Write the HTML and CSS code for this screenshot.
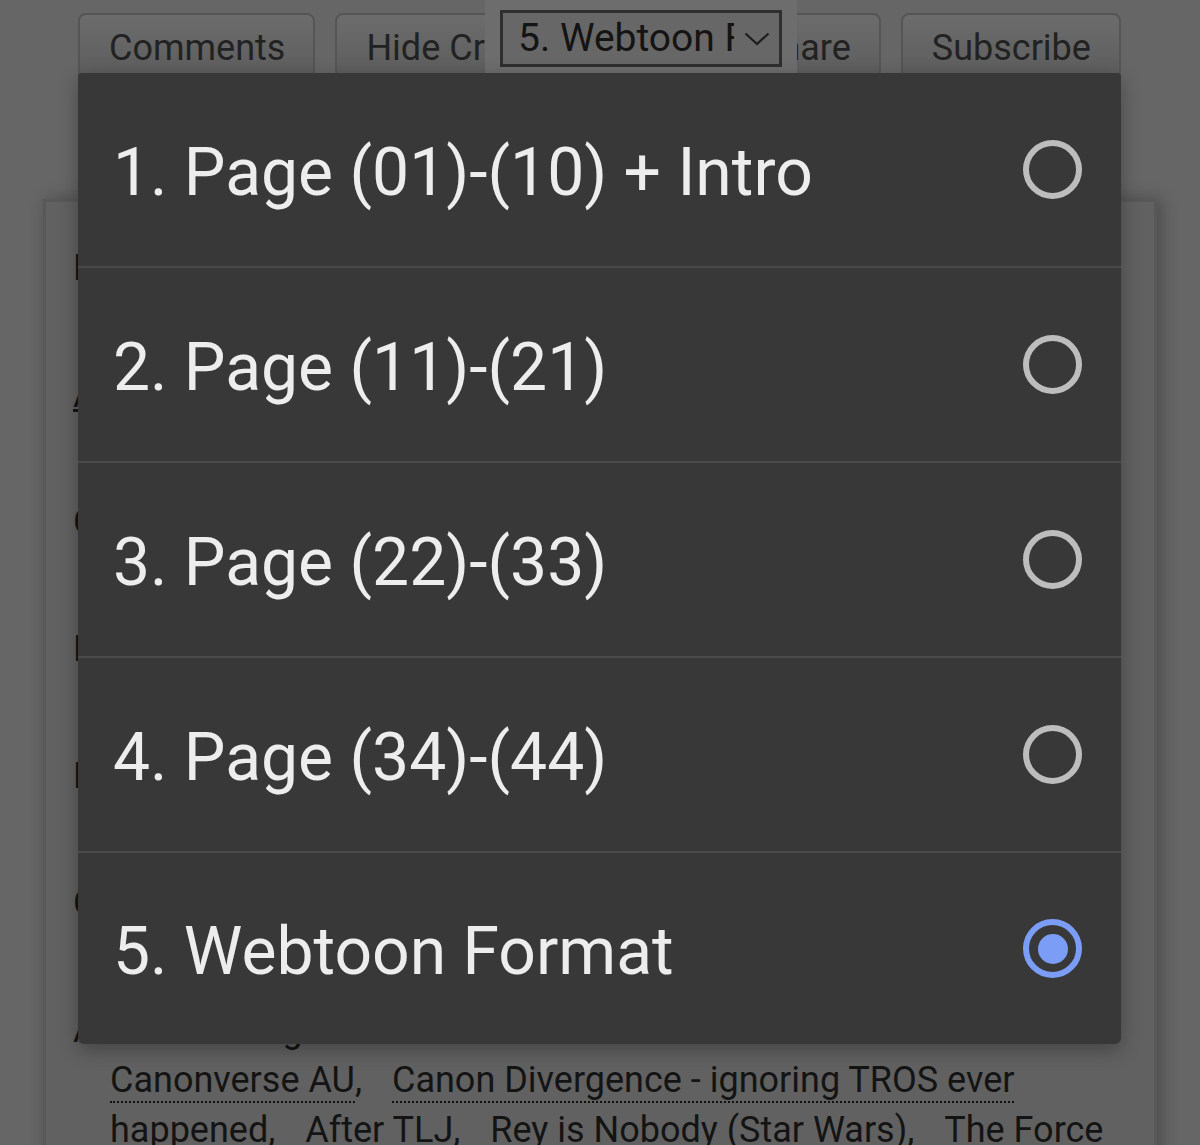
FILE: index.html
```html
<!DOCTYPE html>
<html lang="en">
<head>
<meta charset="utf-8">
<title>Work</title>
<link rel="stylesheet" href="styles.css">
</head>
<body>
<div class="page">
  <ul class="actions">
    <li><a class="btn" href="#">Comments</a></li>
    <li><a class="btn" href="#">Hide Creator's Style</a></li>
    <li><a class="btn" href="#">Share</a></li>
    <li><a class="btn" href="#">Subscribe</a></li>
  </ul>

  <div class="meta">
    <dl class="work-meta">
      <dt>Rating:</dt>
      <dd><a class="tag" href="#">Teen And Up</a></dd>
      <dt><a class="help" href="#">Archive Warning</a>:</dt>
      <dd><a class="tag" href="#">No Warnings</a></dd>
      <dt>Category:</dt>
      <dd><a class="tag" href="#">F/M</a></dd>
      <dt>Fandom:</dt>
      <dd><a class="tag" href="#">Star Wars</a></dd>
      <dt>Relationship:</dt>
      <dd><a class="tag" href="#">Ben Solo/Rey</a></dd>
      <dt>Characters:</dt>
      <dd><a class="tag" href="#">Rey</a></dd>
      <dt>Additional Tags:</dt>
      <dd>
        <ul class="tags">
          <li><a class="tag" href="#">Canonverse AU</a>,</li>
          <li><a class="tag" href="#">Canon Divergence - ignoring TROS ever happened</a>,</li>
          <li><a class="tag" href="#">After TLJ</a>,</li>
          <li><a class="tag" href="#">Rey is Nobody (Star Wars)</a>,</li>
          <li><a class="tag" href="#">The Force Awakens</a></li>
        </ul>
      </dd>
    </dl>
  </div>
</div>

<div class="chapter-anchor">
  <div class="select">
    <span class="select-text">5. Webtoon Format</span>
    <svg class="chevron" width="26" height="14" viewBox="0 0 26 14" aria-hidden="true">
      <polyline points="1.5,1.5 13,12 24.5,1.5" fill="none" stroke="#1e1e1e" stroke-width="2.2"/>
    </svg>
  </div>
</div>

<div class="picker" role="listbox">
  <div class="option" role="option"><span class="label">1. Page (01)-(10) + Intro</span><span class="radio"></span></div>
  <div class="option" role="option"><span class="label">2. Page (11)-(21)</span><span class="radio"></span></div>
  <div class="option" role="option"><span class="label">3. Page (22)-(33)</span><span class="radio"></span></div>
  <div class="option" role="option"><span class="label">4. Page (34)-(44)</span><span class="radio"></span></div>
  <div class="option last" role="option" aria-selected="true"><span class="label">5. Webtoon Format</span><span class="radio checked"></span></div>
</div>
</body>
</html>
```

FILE: styles.css
```css
html, body {
  margin: 0;
  padding: 0;
}

body {
  background: #666666;
  font-family: Roboto, "Noto Sans", "Liberation Sans", sans-serif;
  color: #141414;
  height: 1145px;
  overflow: hidden;
  position: relative;
}

.page {
  display: flex;
  flex-direction: column;
}

/* top action buttons */
.actions {
  list-style: none;
  margin: 0;
  padding: 13px 0 0 78px;
  display: flex;
  gap: 20px;
}

.btn {
  display: block;
  box-sizing: border-box;
  height: 66px;
  padding: 0 28px 0 29px;
  border: 2px solid #555555;
  border-radius: 8px;
  background: linear-gradient(#6c6c6c, #5d5d5d);
  color: #222222;
  font-size: 36px;
  line-height: 66px;
  text-decoration: none;
  white-space: nowrap;
}

/* work meta box */
.meta {
  margin: 120px 43px 0 43px;
  border: 3px solid #585858;
  background: #616161;
  box-shadow: 4px 0 16px rgba(0, 0, 0, 0.28);
  padding: 41px 27px 40px 27px;
  font-size: 36px;
  line-height: 50px;
}

.work-meta {
  margin: 0;
}

.work-meta dt {
  margin: 0;
  line-height: 50px;
}

.work-meta dd {
  margin: 0 0 27px 37px;
  line-height: 50px;
}

.help {
  color: #141414;
  text-decoration: underline;
}

.tag {
  color: #141414;
  text-decoration: none;
  border-bottom: 2px dotted #111111;
}

.tags {
  list-style: none;
  margin: 0;
  padding: 0;
  display: inline;
}

.tags li {
  display: inline;
  margin-right: 21px;
}

/* chapter select anchor */
.chapter-anchor {
  position: absolute;
  left: 485px;
  top: 0;
  width: 312px;
  height: 73px;
  background: #6d6d6d;
}

.select {
  position: absolute;
  left: 15px;
  top: 10px;
  box-sizing: border-box;
  width: 282px;
  height: 57px;
  border: 3px solid #2f2f2f;
  background: #676767;
  display: flex;
  align-items: center;
}

.select-text {
  display: block;
  width: 216px;
  margin-left: 15px;
  overflow: hidden;
  white-space: nowrap;
  font-size: 39px;
  color: #141414;
  line-height: 51px;
}

.chevron {
  margin-left: 10px;
}

/* picker dialog */
.picker {
  position: absolute;
  left: 78px;
  top: 73px;
  width: 1043px;
  background: #383838;
  border-radius: 3px 3px 6px 6px;
  box-shadow: 0 6px 20px rgba(0, 0, 0, 0.3);
}

.option {
  box-sizing: border-box;
  height: 193px;
  display: flex;
  align-items: center;
  justify-content: space-between;
  padding: 0 39px 0 35px;
}

.option + .option {
  height: 195px;
  border-top: 2px solid #4a4a4a;
}

.option.last {
  height: 193px;
}

.label {
  font-size: 66px;
  color: #ededed;
  padding-top: 6px;
  white-space: nowrap;
}

.radio {
  box-sizing: border-box;
  width: 59px;
  height: 59px;
  border: 6px solid #bdbdbd;
  border-radius: 50%;
  display: flex;
  align-items: center;
  justify-content: center;
}

.radio.checked {
  border-color: #7b9df6;
}

.radio.checked::after {
  content: "";
  width: 30px;
  height: 30px;
  border-radius: 50%;
  background: #7b9df6;
}
```
